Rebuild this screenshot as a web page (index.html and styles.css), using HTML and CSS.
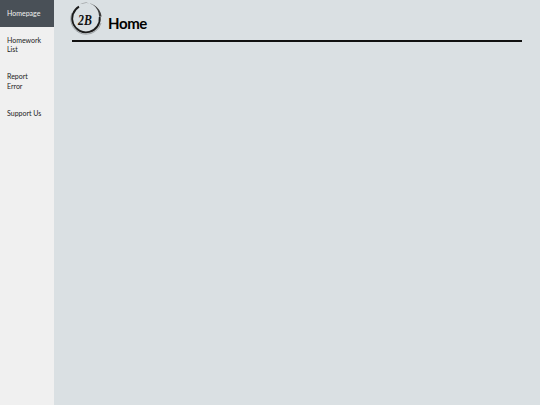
FILE: index.html
```html
<!DOCTYPE html>
<html lang="en">
<head>
<meta charset="utf-8">
<title>Home</title>
<link rel="stylesheet" href="styles.css">
</head>
<body>
<nav class="sidebar">
  <a class="nav-item active">Homepage</a>
  <a class="nav-item">Homework<br>List</a>
  <a class="nav-item">Report<br>Error</a>
  <a class="nav-item">Support Us</a>
</nav>
<main class="content">
  <header class="page-header">
    <svg class="logo" viewBox="0 0 34 34" width="34" height="34" aria-hidden="true">
      <path class="ring-soft" d="M3 11A15.2 15.2 0 0 0 17 32.2A15.2 15.2 0 0 0 32 21"/>
      <path class="ring" d="M10 4.6A13.8 13.8 0 1 0 30.7 15"/>
      <path class="ring-brush" d="M11 2.2A15.6 15.6 0 0 1 32.6 14.5L30 14.8A13.2 13.2 0 0 0 11 2.2Z"/>
      <text class="logo-text" transform="translate(9 22.5) scale(.95 1.25)">2B</text>
    </svg>
    <h1 class="page-title">Home</h1>
  </header>
</main>
</body>
</html>
```
FILE: styles.css
```css
html, body {
  margin: 0;
  height: 100%;
}
body {
  display: flex;
  height: 405px;
  overflow: hidden;
  background: #dae0e3;
  font-family: Lato, sans-serif;
}
.sidebar {
  width: 54px;
  flex: none;
  display: flex;
  flex-direction: column;
  background: #f0f0f0;
}
.nav-item {
  display: block;
  padding: 8.6px 7px;
  font-size: 7px;
  line-height: 9.75px;
  color: #222;
}
.nav-item.active {
  background: #495057;
  color: #f0f0f0;
}
.content {
  flex: 1;
  padding: 0 18px;
}
.page-header {
  display: flex;
  align-items: flex-start;
  gap: 5px;
  height: 40px;
  border-bottom: 2px solid #111;
}
.logo {
  margin-left: -3px;
  margin-top: 2px;
  flex: none;
}
.ring-soft {
  fill: none;
  stroke: #8d9295;
  stroke-width: 0.8;
}
.ring {
  fill: none;
  stroke: #1c1c1c;
  stroke-width: 1.8;
}
.ring-brush {
  fill: #3c3c3c;
}
.logo-text {
  font-family: "Liberation Serif", serif;
  font-style: italic;
  font-weight: bold;
  font-size: 12.5px;
  fill: #111;
}
.page-title {
  margin: 13px 0 0;
  font-size: 15px;
  line-height: 20px;
  font-weight: bold;
  letter-spacing: -0.4px;
  color: #000;
}
```
